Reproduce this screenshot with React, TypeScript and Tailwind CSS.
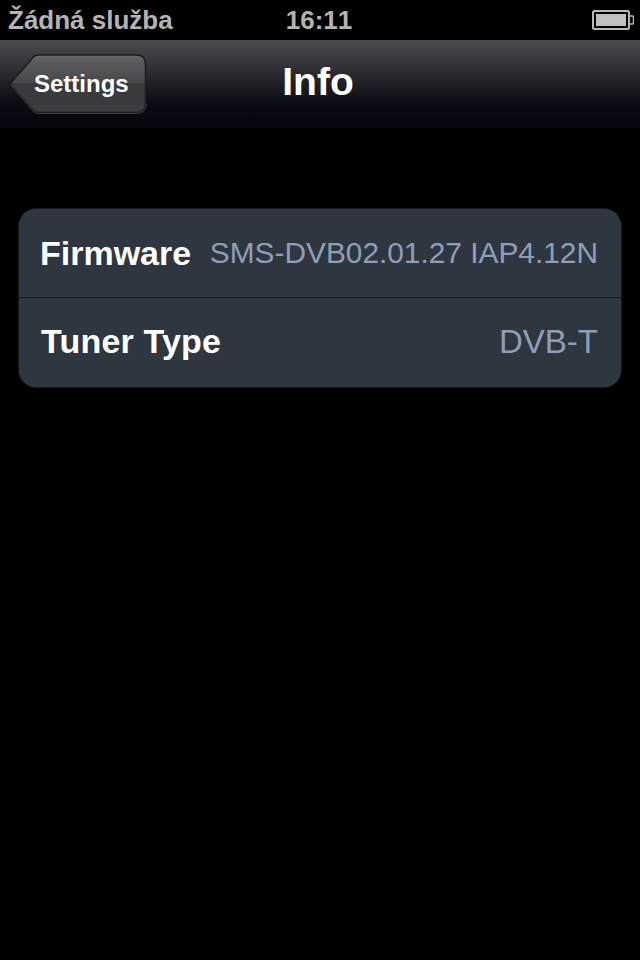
import React from 'react';

const rows = [
  {
    label: 'Firmware',
    labelClass: '',
    value: 'SMS-DVB02.01.27 IAP4.12N',
    valueClass: 'text-[29.85px]',
    rowClass: 'h-[88px] pl-[21px]',
  },
  {
    label: 'Tuner Type',
    labelClass: '[font-kerning:normal] tracking-[0.2px]',
    value: 'DVB-T',
    valueClass: 'text-[33px]',
    rowClass: 'h-[90px] border-t border-[#14171b] pb-[2px] pl-[22px]',
  },
];

const BatteryIcon = () => (
  <svg width="42" height="20" viewBox="0 0 42 20" fill="none">
    <rect x="1" y="1" width="36" height="18" rx="1.5" stroke="#b8b8b8" strokeWidth="2" />
    <rect x="4" y="4" width="30" height="12" fill="#c0c0c0" />
    <path d="M38 6h2.5a1 1 0 0 1 1 1v6a1 1 0 0 1-1 1H38" stroke="#b8b8b8" strokeWidth="1.5" />
  </svg>
);

const BackShape = () => (
  <svg className="absolute inset-0" width="138" height="60" viewBox="0 0 138 60" fill="none">
    <defs>
      <linearGradient id="backFill" x1="0" y1="0" x2="0" y2="1">
        <stop offset="0" stopColor="#6e6e70" />
        <stop offset="0.08" stopColor="#5e5e60" />
        <stop offset="0.48" stopColor="#474749" />
        <stop offset="0.5" stopColor="#3a3a3c" />
        <stop offset="1" stopColor="#3c3c3e" />
      </linearGradient>
    </defs>
    <path
      d="M1 30 L24 3.5 Q26 1 30 1 L127 1 Q136.500 1 136.500 10 L136.500 50 Q136.500 58.500 127 58.500 L30 58.500 Q26 58.500 24 56 Z"
      fill="url(#backFill)"
      stroke="#1c1c20"
      strokeWidth="1.5"
    />
    <path d="M2 31 L24 57 Q26 59.500 30 59.500 L127 59.500 Q137 59.500 137.500 50" stroke="#3c3c42" strokeWidth="1" />
  </svg>
);

export default function App() {
  return (
    <div className="min-h-[960px] w-[640px] bg-black font-['Liberation_Sans',Arial,sans-serif] [font-kerning:none]">
      {/* status bar */}
      <div className="grid h-10 grid-cols-3 items-center bg-black pl-2 pr-[6px] text-[26px] font-bold leading-10 text-[#b4b4b4]">
        <span className="whitespace-nowrap">Žádná služba</span>
        <span className="pr-1 text-center">16:11</span>
        <span className="flex justify-end">
          <BatteryIcon />
        </span>
      </div>

      {/* nav bar */}
      <div className="relative flex h-[88px] items-center justify-center bg-[linear-gradient(#4b4b50_0%,#38383e_22%,#1e1e24_50%,#0b0b14_72%,#05050c_100%)]">
        <button className="absolute left-[9px] top-[14px] h-[60px] w-[138px]">
          <BackShape />
          <span className="relative block pl-[25px] text-left text-2xl font-bold leading-[58px] text-white">
            Settings
          </span>
        </button>
        <h1 className="pb-[5px] pr-1 text-[39px] font-bold leading-none text-white">Info</h1>
      </div>

      {/* info table */}
      <div className="px-[18px] pt-20">
        <div className="rounded-[18px] border border-[#17191d] bg-[#2e363f]">
          {rows.map((row) => (
            <div
              key={row.label}
              className={`flex items-center justify-between pr-[23px] ${row.rowClass}`}
            >
              <span className={`text-[34px] font-bold text-white ${row.labelClass}`}>{row.label}</span>
              <span className={`whitespace-nowrap text-[#8f9fb8] ${row.valueClass}`}>{row.value}</span>
            </div>
          ))}
        </div>
      </div>
    </div>
  );
}
